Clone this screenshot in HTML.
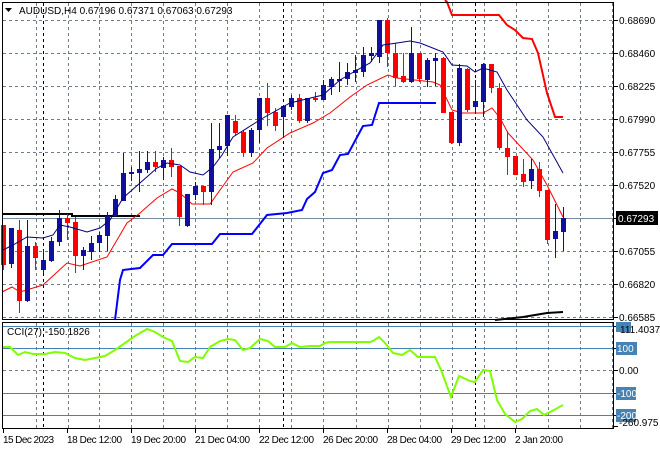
<!DOCTYPE html>
<html><head><meta charset="utf-8"><style>
html,body{margin:0;padding:0;background:#fff;width:660px;height:450px;overflow:hidden}
svg text{font-family:"Liberation Sans",sans-serif;font-size:10px;fill:#000}
</style></head><body>
<svg id="s" width="660" height="450" xmlns="http://www.w3.org/2000/svg">
<rect x="0" y="0" width="660" height="450" fill="#fff"/>
<g id="grid" stroke="#6e7b8b" stroke-width="1" stroke-dasharray="3,3"></g>
<g id="vd" stroke="#000" stroke-width="1" stroke-dasharray="3,3">
<line x1="43.5" y1="3" x2="43.5" y2="320"/><line x1="283.5" y1="3" x2="283.5" y2="320"/><line x1="475.5" y1="3" x2="475.5" y2="320"/>
<line x1="43.5" y1="322" x2="43.5" y2="428"/><line x1="283.5" y1="322" x2="283.5" y2="428"/><line x1="475.5" y1="322" x2="475.5" y2="428"/>
</g>
<line x1="2" y1="218.5" x2="614" y2="218.5" stroke="#778899"/>
<polyline points="2,214 72,214 72,216 140,216" fill="none" stroke="#000" stroke-width="2"/>
<polyline fill="none" stroke="#0000ff" stroke-width="2" points="115,320 120,280 123,270 140,268 153,255 163,255 172,244 212,244 220,234 252,234 267,215 287,213 302,210 307,199 315,192 323,173 332,170 340,155 348,154 363,126 372,125 379,103 436,103"/>
<polyline fill="none" stroke="#ff0000" stroke-width="2" points="445,0 447,2 452,15 499,15 507,25 515,30 523,38 532,39 538,53 547,93 555,117 563,117"/>
<polyline fill="none" stroke="#000" stroke-width="2" points="495,320 523,317 547,313 563,312"/>
<polyline fill="none" stroke="#ff0000" stroke-width="1" points="2,292 12,287 20,292 43,285 67,263 80,266 107,257 127,223 140,213 157,198 172,189 180,193 192,204 210,204 233,172 253,163 267,148 290,133 313,123 330,113 350,97 367,85 388,75 397,78 433,82 440,85 452,110 462,113 483,113 492,108 500,118 508,133 533,160 547,185 563,217"/>
<g id="c"></g>
<polyline fill="none" stroke="#000080" stroke-width="1" points="3,250 13,245 27,237 43,238 53,235 60,225 70,227 87,232 100,228 110,220 123,198 140,183 157,168 167,163 180,165 190,172 203,175 213,167 222,155 233,137 263,118 290,103 323,95 340,80 357,70 370,63 383,45 397,43 410,41 420,43 443,52 452,65 467,66 475,72 483,68 497,72 507,90 527,120 543,137 563,173"/>
<g stroke="#4682b4" stroke-width="1">
<line x1="2" y1="326.5" x2="614" y2="326.5"/><line x1="2" y1="348.5" x2="614" y2="348.5"/><line x1="2" y1="393.5" x2="614" y2="393.5"/><line x1="2" y1="415.5" x2="614" y2="415.5"/>
</g>
<polyline fill="none" stroke="#7fff00" stroke-width="2" points="3,347 10,347 18,355 25,352 33,354 45,354 55,352 65,353 75,358 85,360 95,358 105,356 115,350 125,343 135,336 147,329 155,332 163,337 172,341 180,361 188,362 195,357 203,358 210,347 220,341 228,339 235,340 243,350 250,348 260,339 268,341 275,347 285,347 292,343 300,347 310,346 320,346 325,343 330,342 370,342 373,341 379,337 385,343 393,353 402,355 410,350 418,357 435,357 441,370 451,397 459,376 470,381 475,382 483,370 490,371 497,400 505,414 515,422 522,419 530,411 537,409 544,415 552,411 563,405"/>
<rect x="2.5" y="2.5" width="611" height="317" fill="none" stroke="#000"/>
<rect x="2.5" y="322.5" width="611" height="106" fill="none" stroke="#000"/>
<g id="ticks" stroke="#000"></g>
<path d="M5,8 L12,8 L8.5,12 Z" fill="#000"/>
<text x="19" y="14">AUDUSD,H4  0.67196 0.67371 0.67063 0.67293</text>
<text x="7" y="335">CCI(27) -150.1826</text>
<g>
<text x="619" y="24">0.68690</text><text x="619" y="57">0.68460</text><text x="619" y="90">0.68225</text><text x="619" y="123">0.67990</text><text x="619" y="156">0.67755</text><text x="619" y="189">0.67520</text><text x="619" y="255">0.67055</text><text x="619" y="288">0.66820</text><text x="619" y="321">0.66585</text>
<rect x="616" y="211" width="42" height="14" fill="#000"/><text x="618" y="222" style="fill:#fff">0.67293</text>
<rect x="616" y="322" width="15" height="10" fill="#4682b4"/><text x="620" y="333">111.4037</text>
<rect x="616" y="342" width="21" height="13" fill="#4682b4"/><text x="617" y="352" style="fill:#fff">100</text>
<text x="619" y="374">0.00</text>
<rect x="616" y="387" width="20" height="13" fill="#4682b4"/><text x="617" y="397" style="fill:#fff">-100</text>
<rect x="616" y="409" width="20" height="13" fill="#4682b4"/><text x="617" y="419" style="fill:#fff">-200</text>
<text x="619" y="426">-260.975</text>
</g>
<g>
<text x="3" y="443" textLength="51">15 Dec 2023</text><text x="67" y="443" textLength="55">18 Dec 12:00</text><text x="131" y="443" textLength="55">19 Dec 20:00</text><text x="195" y="443" textLength="55">21 Dec 04:00</text><text x="259" y="443" textLength="55">22 Dec 12:00</text><text x="323" y="443" textLength="55">26 Dec 20:00</text><text x="387" y="443" textLength="55">28 Dec 04:00</text><text x="451" y="443" textLength="55">29 Dec 12:00</text><text x="515" y="443" textLength="48">2 Jan 20:00</text>
</g>
</svg>
<script>
var NS="http://www.w3.org/2000/svg";
function el(p,t,a){var e=document.createElementNS(NS,t);for(var k in a)e.setAttribute(k,a[k]);p.appendChild(e);return e;}
var g=document.getElementById("grid");
var xs=[36,68,99,131,163,195,227,259,291,323,356,388,420,452,484,516,548,580,612];
xs.forEach(function(x){el(g,"line",{x1:x+.5,y1:3,x2:x+.5,y2:320});el(g,"line",{x1:x+.5,y1:323,x2:x+.5,y2:428});});
[20,53,86,119,152,185,251,284,317].forEach(function(y){el(g,"line",{x1:3,y1:y+.5,x2:613,y2:y+.5});});
el(g,"line",{x1:3,y1:370.5,x2:613,y2:370.5});
var t=document.getElementById("ticks");
[20,53,86,119,152,185,218,251,284,317,326,348,370,393,415,426].forEach(function(y){el(t,"line",{x1:614,y1:y+.5,x2:618,y2:y+.5});});
[3,67,131,195,259,323,387,451,515].forEach(function(x){el(t,"line",{x1:x+.5,y1:429,x2:x+.5,y2:433});});
var C=[
[3,'r',225,265,225,270],[11,'b',228,264,228,268],[19,'r',230,301,220,313],[27,'b',246,301,220,302],[35,'r',246,258,242,270],
[43,'b',260,270,250,273],[51,'b',241,261,237,262],[59,'b',218,242,210,246],[67,'r',218,223,214,240],[75,'r',222,256,217,273],
[83,'b',250,256,247,270],[91,'b',243,252,236,260],[99,'b',235,243,232,252],[107,'b',216,236,212,251],[115,'b',199,216,195,217],
[123,'b',173,201,153,201],[131,'b',172,174,167,181],[139,'b',169,173,151,192],[147,'b',162,170,151,173],[155,'r',162,167,151,172],
[163,'b',160,168,157,180],[171,'r',160,167,148,177],[179,'r',166,217,166,226],[187,'b',194,226,194,227],[195,'b',186,195,182,200],
[203,'r',186,192,186,205],[211,'b',149,192,123,205],[219,'b',146,150,123,158],[227,'b',115,146,115,156],[235,'r',121,133,115,135],
[243,'r',132,153,130,157],[251,'b',130,153,128,157],[259,'b',98,130,98,143],[267,'r',98,113,83,126],[275,'r',112,126,108,131],
[283,'b',106,117,106,137],[291,'b',98,107,95,110],[299,'r',98,121,94,123],[307,'b',98,121,98,123],[315,'r',98,100,92,102],
[323,'b',85,100,80,100],[331,'b',79,87,77,95],[339,'b',79,81,62,92],[347,'b',72,79,63,85],[355,'b',70,73,55,82],
[363,'b',55,72,47,77],[371,'b',53,56,47,62],[379,'b',20,57,20,63],[387,'r',20,53,18,67],[395,'r',53,78,43,86],
[403,'r',76,82,53,83],[411,'b',53,82,27,83],[419,'r',53,79,53,82],[427,'b',60,80,58,87],[435,'b',58,61,53,86],
[443,'r',58,113,57,113],[451,'r',112,143,112,144],[459,'b',68,143,64,146],[467,'r',69,110,68,112],[475,'b',101,107,80,113],
[483,'b',64,102,63,117],[491,'r',64,88,64,93],[499,'r',88,148,83,150],[507,'r',148,157,131,175],[515,'r',156,175,156,175],
[523,'r',174,182,159,187],[531,'b',169,181,159,189],[539,'r',169,191,162,197],[547,'r',190,240,190,244],[555,'b',231,239,204,258],
[563,'b',218,232,207,251]];
var cg=document.getElementById("c");
C.forEach(function(c){var col=c[1]=='r'?'#ff0000':'#1010a0',wc=c[1]=='r'?'#ff0000':'#0000ff';
el(cg,"line",{x1:c[0]+.5,y1:c[4],x2:c[0]+.5,y2:c[5],stroke:wc,"stroke-width":1});
el(cg,"rect",{x:c[0]-2,y:c[2],width:5,height:Math.max(1,c[3]-c[2]),fill:col});});
</script>
</body></html>
